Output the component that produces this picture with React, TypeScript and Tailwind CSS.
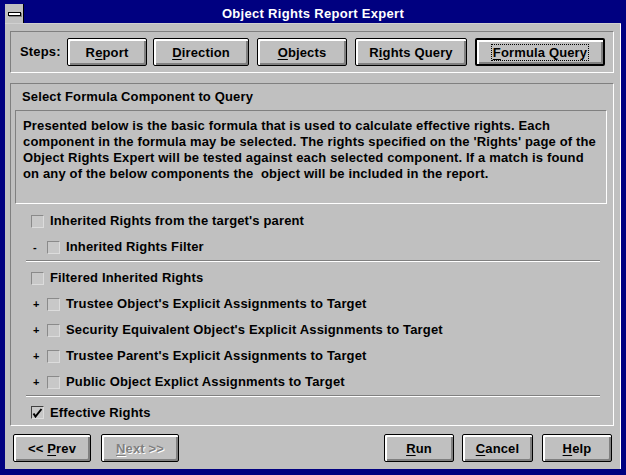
import React from "react";

const bevel =
  "shadow-[inset_1px_1px_0_#ffffff,inset_2px_2px_0_#ffffff,inset_-1px_-1px_0_#808080,inset_-2px_-2px_0_#808080]";

function Btn({
  label,
  mn,
  width,
  isDefault,
  disabled,
  focus,
}: {
  label: string;
  mn: number;
  width: string;
  isDefault?: boolean;
  disabled?: boolean;
  focus?: boolean;
}) {
  const text = (
    <>
      {label.slice(0, mn)}
      <span className="underline underline-offset-2">{label[mn]}</span>
      {label.slice(mn + 1)}
    </>
  );
  return (
    <div
      className={`${width} h-[28px] shrink-0 flex items-center justify-center rounded-[2px] bg-[#c0c0c0] ${
        isDefault ? "border-2" : "border"
      } border-black ${bevel}`}
    >
      <span
        className={`px-px leading-[15px] ${
          focus ? "outline-1 outline-dotted outline-black" : ""
        } ${disabled ? "text-[#808080] [text-shadow:1px_1px_0_#ffffff]" : "text-black"}`}
      >
        {text}
      </span>
    </div>
  );
}

function Check({ checked }: { checked?: boolean }) {
  return (
    <div
      className={`w-[13px] h-[13px] shrink-0 border ${
        checked ? "border-t-[#404040] border-l-[#404040]" : "border-t-[#8a8a8a] border-l-[#8a8a8a]"
      } border-r-[#dcdcdc] border-b-[#dcdcdc] bg-[#c8c8c8] flex items-center justify-center`}
    >
      {checked && (
        <svg width="11" height="11" viewBox="0 0 11 11">
          <path d="M1.5 6.5 L3.5 9.5 L9.5 2" stroke="#000" strokeWidth="2" fill="none" />
        </svg>
      )}
    </div>
  );
}

function Row({ label, prefix, checked }: { label: string; prefix?: string; checked?: boolean }) {
  return (
    <div className="h-[26px] flex items-center">
      {prefix ? (
        <>
          <span className="w-[16px] pl-[2px] text-[11px]">{prefix}</span>
          <Check checked={checked} />
        </>
      ) : (
        <Check checked={checked} />
      )}
      <span className="ml-[6px]">{label}</span>
    </div>
  );
}

function Sep() {
  return <div className="ml-[11px] mr-[7px] h-[2px] shrink-0 border-t border-[#808080] border-b border-b-white" />;
}

export default function App() {
  return (
    <div className="w-[626px] h-[475px] bg-[#000080] pl-[5px] pt-[4px] pr-[5px] pb-[6px] flex flex-col font-['Liberation_Sans',Arial,sans-serif] font-bold text-[13px] tracking-[0.15px] text-black">
      {/* title bar */}
      <div className="h-[20px] flex border-b border-[#d0d0d0]">
        <div className="w-[19px] h-[19px] bg-[#c0c0c0] border-r border-black flex items-center justify-center">
          <div className="w-[13px] h-[4px] bg-white border border-black shadow-[1px_1px_0_#808080]" />
        </div>
        <div className="flex-1 flex items-center justify-center text-white text-[13px] tracking-[0.3px] pr-[19px]">
          Object Rights Report Expert
        </div>
      </div>

      {/* body */}
      <div className="flex-1 bg-[#c0c0c0] border-r border-white pl-[5px] pr-[6px] pt-[7px] flex flex-col">
        {/* steps */}
        <div className="h-[42px] border border-t-[#808080] border-l-[#808080] border-r-white border-b-white flex items-center pl-[9px]">
          <span className="w-[47px]">Steps:</span>
          <div className="flex">
            <Btn label="Report" mn={1} width="w-[80px]" />
            <div className="ml-[6px]">
              <Btn label="Direction" mn={0} width="w-[96px]" />
            </div>
            <div className="ml-[8px]">
              <Btn label="Objects" mn={0} width="w-[90px]" />
            </div>
            <div className="ml-[8px]">
              <Btn label="Rights Query" mn={1} width="w-[112px]" />
            </div>
            <div className="ml-[8px]">
              <Btn label="Formula Query" mn={0} width="w-[130px]" isDefault focus />
            </div>
          </div>
        </div>

        {/* main panel */}
        <div className="mt-[10px] h-[343px] border border-t-[#808080] border-l-[#808080] border-r-white border-b-white flex flex-col pl-[4px] pr-[6px] pt-[5px]">
          <div className="h-[16px] leading-[16px] pl-[7px]">Select Formula Component to Query</div>
          <div className="mt-[5px] h-[94px] shrink-0 border border-t-[#808080] border-l-[#808080] border-r-white border-b-white pl-[7px] pt-[7px] leading-[16px]">
            Presented below is the basic formula that is used to calculate effective rights. Each
            <br />
            component in the formula may be selected. The rights specified on the 'Rights' page of the
            <br />
            Object Rights Expert will be tested against each selected component. If a match is found
            <br />
            on any of the below components the&nbsp; object will be included in the report.
          </div>

          <div className="mt-[4px] pl-[16px]">
            <Row label="Inherited Rights from the target's parent" />
            <Row label="Inherited Rights Filter" prefix="-" />
          </div>
          <Sep />
          <div className="mt-[3px] pl-[16px]">
            <Row label="Filtered Inherited Rights" />
            <Row label="Trustee Object's Explicit Assignments to Target" prefix="+" />
            <Row label="Security Equivalent Object's Explicit Assignments to Target" prefix="+" />
            <Row label="Trustee Parent's Explicit Assignments to Target" prefix="+" />
            <Row label="Public Object Explict Assignments to Target" prefix="+" />
          </div>
          <Sep />
          <div className="flex-1 pl-[16px] pt-[3px] flex items-center">
            <div className="flex items-center">
              <Check checked />
              <span className="ml-[6px]">Effective Rights</span>
            </div>
          </div>
        </div>

        {/* bottom buttons */}
        <div className="mt-[8px] flex pl-[3px]">
          <Btn label="<< Prev" mn={3} width="w-[78px]" />
          <div className="ml-[10px]">
            <Btn label="Next >>" mn={0} width="w-[78px]" disabled />
          </div>
          <div className="ml-auto flex">
            <Btn label="Run" mn={0} width="w-[70px]" />
            <div className="ml-[8px]">
              <Btn label="Cancel" mn={0} width="w-[71px]" />
            </div>
            <div className="ml-[9px] mr-[2px]">
              <Btn label="Help" mn={0} width="w-[70px]" />
            </div>
          </div>
        </div>
      </div>
    </div>
  );
}
